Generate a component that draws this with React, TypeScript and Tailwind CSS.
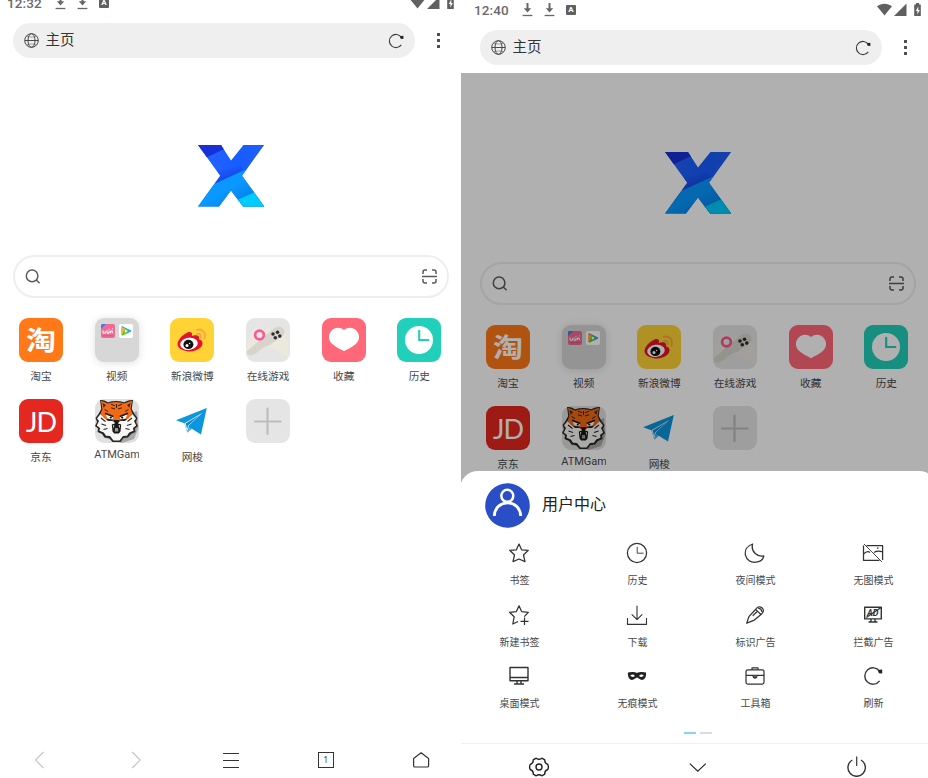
import React from "react";

const cjk = "font-['Roboto','Noto_Sans_CJK_SC',sans-serif]";

type P = { children?: React.ReactNode };

/* ---------- status bar ---------- */

const DownloadGlyph = () => (
  <svg width="11" height="14" viewBox="0 0 11 14" fill="none" stroke="#666" strokeWidth="2">
    <path d="M5.5 0v7" />
    <path d="M1.8 5.2 5.5 9.6 9.2 5.2z" fill="#666" stroke="none" />
    <path d="M.6 12.5h9.8" strokeWidth="1.3" />
  </svg>
);

const StatusBar = ({ time }: { time: string }) => (
  <div className="flex h-[20px] shrink-0 items-center pl-[13px] pr-[6.5px] text-[#6a6a6a]">
    <span className="w-[48px] font-['Roboto',sans-serif] text-[13.5px] font-medium leading-5 tracking-[0.1px]">{time}</span>
    <div className="flex items-center gap-[11px]">
      <DownloadGlyph />
      <DownloadGlyph />
    </div>
    <span className="ml-[11px] flex h-[10px] w-[10px] items-center justify-center rounded-[1px] bg-[#606060] font-['Roboto',sans-serif] text-[8px] font-bold leading-none text-white">
      A
    </span>
    <svg className="ml-auto" width="45" height="14" viewBox="0 0 45 14" fill="#606060">
      <path d="M0 3.2C4.4-.2 10.6-.2 15 3.2L7.5 12.6z" />
      <path d="M29.5 .5V13H17z" />
      <path d="M37.2 1.4h1.7V0h3.2v1.4h1.7V13h-6.6z" />
      <path d="M41.3 3.4 38.8 8h1.6v3.4l2.4-4.5h-1.5z" fill="#fff" />
    </svg>
  </div>
);

/* ---------- line icons ---------- */

const RefreshIcon = ({ size }: { size: number }) => (
  <svg width={size} height={size} viewBox="0 0 20 20" fill="none" stroke="#3a3a3a" strokeWidth="1.4">
    <path d="M16.6 5.2A8.2 8.2 0 1 0 16.6 14.8" />
    <path d="M14.8 4 19.2 3.4V7.4L15.8 7.3z" fill="#222" stroke="none" />
  </svg>
);

const Globe = () => (
  <svg width="15" height="15" viewBox="0 0 15 15" fill="none" stroke="#4a4a4a" strokeWidth="1">
    <circle cx="7.5" cy="7.5" r="6.8" />
    <ellipse cx="7.5" cy="7.5" rx="3.5" ry="6.8" />
    <path d="M.7 7.5h13.6" />
    <path d="M2.5 3.2c3 1.1 7 1.1 10 0M2.5 11.8c3-1.1 7-1.1 10 0" strokeWidth=".5" />
  </svg>
);

const XLogo = () => (
  <svg width="67" height="62" viewBox="0 0 67 62">
    <defs>
      <clipPath id="xclip">
        <path d="M0 0H23L33 15.5 45.5 0H66.2L44 30.7 66.2 61.5H45L33 45.5 21 61.5H0L22.2 30.7z" />
      </clipPath>
      <linearGradient id="xmid" x1="0" x2="1" y1="0" y2=".2">
        <stop offset="0" stopColor="#2864ff" />
        <stop offset=".65" stopColor="#175cff" />
        <stop offset="1" stopColor="#2260f4" />
      </linearGradient>
      <linearGradient id="xmidDark" x1=".3" x2=".65" y1="0" y2="1">
        <stop offset="0" stopColor="#1738cf" stopOpacity="0" />
        <stop offset="1" stopColor="#1738cf" stopOpacity=".75" />
      </linearGradient>
      <linearGradient id="xlow" x1="0" x2="1" y1="0" y2="1">
        <stop offset=".5" stopColor="#0898ff" />
        <stop offset=".82" stopColor="#087ce6" />
      </linearGradient>
    </defs>
    <g clipPath="url(#xclip)">
      <path d="M0 0h67v62H0z" fill="url(#xmid)" />
      <path d="M18 26 43 21 47 25 17 39z" fill="url(#xmidDark)" />
      <path d="M0 0H26V4.2L6 13.6H0z" fill="#1830d8" />
      <path d="M0 46.5 51 23 67 34V62H0z" fill="url(#xlow)" />
      <path d="M36 56.5 60 45.5 67 47V62H36z" fill="#00cbff" />
    </g>
  </svg>
);

/* ---------- tiles ---------- */

const Tile = ({ className, children }: P & { className: string }) => (
  <div className={`flex h-[44px] w-[44px] items-center justify-center overflow-hidden rounded-[9px] ${className}`}>{children}</div>
);

const Taobao = () => (
  <Tile className="bg-[#ff7919]">
    <span className="-mt-[2px] scale-y-[.87] font-['Noto_Sans_CJK_SC',sans-serif] text-[30px] font-bold leading-none text-white">淘</span>
  </Tile>
);

const Video = () => (
  <div className="flex h-[44px] w-[44px] items-start gap-[4px] rounded-[9px] bg-[#d7d7d7] pl-[6px] pt-[6px] shadow-[0_1px_8px_rgba(0,0,0,0.13)]">
    <svg width="14" height="14" viewBox="0 0 14 14">
      <rect width="14" height="14" rx="2" fill="#f06a96" />
      <path d="M0 2Q0 0 2 0H5L0 5z" fill="#397be5" />
      <path d="M2 6.4v2.8h2.4V7.1M6 6.3v3h2V6.8M9.5 9.2V7h1.8v2.2M8 4.8v1M11.4 4.4v1" stroke="#fff" strokeWidth="1" fill="none" />
      <path d="M2 11.7h10" stroke="#d94a7c" strokeWidth=".7" />
    </svg>
    <svg width="14" height="14" viewBox="0 0 14 14">
      <rect width="14" height="14" rx="2" fill="#fff" />
      <path d="M3 2.6 12 7 8 9z" fill="#15a6ef" stroke="#15a6ef" strokeLinejoin="round" />
      <path d="M2.8 3v8L6 8V5z" fill="#ffb62b" stroke="#ff9a22" strokeLinejoin="round" />
      <path d="M3.4 11.2 10 7.9 6 5.2z" fill="#5ac72c" stroke="#5ac72c" strokeLinejoin="round" />
      <path d="M5.8 5.2v3.6L8.8 7z" fill="#fff" />
    </svg>
  </div>
);

const Weibo = () => (
  <Tile className="bg-[#ffd235]">
    <svg width="44" height="44" viewBox="0 0 44 44">
      <path d="M7.5 26C7.5 22 12.5 16.5 17.5 14.4C21 13 23 15 21.8 18C25 16.8 30.2 16.7 28.9 21.2C33 22.3 33.6 26 31 29C28 32.4 23 33.8 18.3 33.4C12 32.7 7.5 30 7.5 26z" fill="#e3152c" />
      <ellipse cx="19" cy="25.8" rx="8.8" ry="6" transform="rotate(-9 19 25.8)" fill="#fff" />
      <ellipse cx="18.4" cy="26.4" rx="5" ry="4.6" fill="#111" />
      <circle cx="17" cy="27.4" r="1.5" fill="#fff" />
      <circle cx="19.6" cy="25.5" r=".7" fill="#fff" />
      <path d="M26.8 11.8C32.5 10.4 36.2 15 34.6 20.4M27 16C29.8 15.3 31.4 17.2 30.7 19.7" fill="none" stroke="#f9a640" strokeWidth="1.8" strokeLinecap="round" />
    </svg>
  </Tile>
);

const Games = () => (
  <Tile className="bg-[#e5e5e5]">
    <svg width="44" height="44" viewBox="0 0 44 44">
      <path d="M0 34C1 23 5 10 11.5 9.3C15 9 17 12.5 22 12C27 10.5 31 6.8 35.5 9C40 12 43 26 44 40C37 37 31 30 23.5 29.3C17 28 12 37 0 34z" fill="#ebe8dc" />
      <path d="M1 33 28.5 9.8C35 5.8 40.5 11 37.8 17L24 27C15 29 10 38 4 37.5Q0 37.5 1 33z" fill="#d7d5cb" />
      <circle cx="13.5" cy="17" r="4.4" fill="#eeeadf" stroke="#f75b99" strokeWidth="2.7" />
      <g fill="#2d2d32">
        <circle cx="27" cy="16" r="1.8" />
        <circle cx="31.5" cy="14.2" r="1.8" />
        <circle cx="29.3" cy="19.7" r="1.8" />
        <circle cx="33.8" cy="18.1" r="1.8" />
      </g>
    </svg>
  </Tile>
);

const Favorites = () => (
  <Tile className="bg-[#ff6878]">
    <svg width="44" height="44" viewBox="0 0 44 44">
      <path d="M22 12C18 8.8 12.6 9.2 9.4 12.8C5.8 17 6.2 22.5 10.2 26C14 29.5 19 31.2 22 33.3C25 31.2 30 29.5 33.8 26C37.8 22.5 38.2 17 34.6 12.8C31.4 9.2 26 8.8 22 12z" fill="#fff" />
    </svg>
  </Tile>
);

const HistoryTile = () => (
  <Tile className="bg-[#22cfba]">
    <svg width="44" height="44" viewBox="0 0 44 44">
      <circle cx="22" cy="22" r="14" fill="#fff" />
      <path d="M22.2 12V22H32.2" fill="none" stroke="#22cfba" strokeWidth="2.1" />
    </svg>
  </Tile>
);

const JD = () => (
  <Tile className="bg-[#e5281f]">
    <span className="font-['Lato',sans-serif] text-[27px] font-normal leading-none tracking-[-1px] text-white">JD</span>
  </Tile>
);

const Tiger = () => (
  <Tile className="bg-[#e0e0e0]">
    <svg width="44" height="44" viewBox="0 0 44 44">
      <path d="M42 12 43.5 29 39 40 27 44 10 39 4 29z" fill="#a8a8a8" />
      {/* dark outline of the head */}
      <path d="M5 .8Q10 1 13 3.3Q21 .5 29 3.3Q33 1 38 .8L36.8 10 39.5 15 42.5 19 41 23 43 27 40 29.5 40.5 33 36 35 33 38.5 28.5 39 25.5 43H17.5L14 39 9.5 38.5 7 35 2.5 33 3 29.5 0 27 2 23 .5 19 3.5 15 6.2 10z" fill="#2a2624" />
      {/* white mane and cheeks */}
      <path d="M5.5 15 2 19.5 4 22 1.8 26.5 5 29 4.5 31.8 8.8 33.5 11 36.8 15 37 18.5 41.5H24.5L28 37 32 36.8 34.2 33.5 38.5 31.8 38 29 41.2 26.5 39 22 41 19.5 37.5 15 30 22H13z" fill="#f6f6f4" />
      {/* orange forehead, ears and nose bridge */}
      <path d="M6 1.8 13 4.6Q21 1.5 29 4.6L37 1.8 35.6 10 37.5 15 33 20 25.5 19.5 25 23H18L17.5 19.5 10 20 5.5 15 7.4 10z" fill="#f26a12" />
      <path d="M7.5 4 11 6 8.6 8.8zM35.5 4 32 6 34.4 8.8z" fill="#3a2a22" />
      <path d="M10.5 15.5 18 17.8 17.5 20.5 12.5 19.5zM32.5 15.5 25 17.8 25.5 20.5 30.5 19.5z" fill="#fff" />
      <path d="M10 14.2 18.3 17.4M33 14.2 24.7 17.4" stroke="#1d1a18" strokeWidth="1.6" />
      <path d="M16 5.2 20 6.8M27 5.2 23 6.8M16 8.8 20 10M27 8.8 23 10M21.5 5V9M9.5 10.5 13 12.5M33.5 10.5 30 12.5" stroke="#2a211d" strokeWidth="1" />
      <path d="M6 19 10.5 22.5M37 19 32.5 22.5M6.5 25 11 26.5M36.5 25 32 26.5M8.5 30.5 12.5 29.5M34.5 30.5 30.5 29.5" stroke="#2a2624" strokeWidth="1.1" />
      <circle cx="15.8" cy="18.6" r="1.1" fill="#111" />
      <circle cx="27.2" cy="18.6" r="1.1" fill="#111" />
      <path d="M18.2 21H24.8L23 24.4H20zM16.8 25.5 21.5 24 26.2 25.5 25.5 32.5 23.8 34.5H19.2L17.5 32.5z" fill="#171717" />
      <path d="M18 26.3 19.3 26.2 18.8 29.5zM23.7 26.2H25L24.3 29.5z" fill="#fff" />
      <path d="M20 29H23L23.4 32.5H19.7z" fill="#999" />
    </svg>
  </Tile>
);

const Telegram = () => (
  <Tile className="bg-white">
    <svg width="44" height="44" viewBox="0 0 44 44">
      <path d="M36.8 9 6 21.2 14.4 24.2 17.2 33.6 21.8 29.8 31 35.4z" fill="#0b96dd" />
      <path d="M14.4 24.2 32.5 13.8 19 26.2 17.2 33.6z" fill="#d9effa" />
      <path d="M17.2 33.6 18.8 28.2 21.8 29.8z" fill="#5ab5e5" />
      <path d="M15.8 24.6 29 16.4 18 26.6 17.2 30z" fill="#0b87cf" />
    </svg>
  </Tile>
);

const AddTile = () => (
  <Tile className="bg-[#e5e5e5]">
    <svg width="44" height="44" viewBox="0 0 44 44" stroke="#bdbdbd" strokeWidth="2.2" strokeLinecap="round">
      <path d="M21.5 9.5V35M9 22.5H34.5" />
    </svg>
  </Tile>
);

const shortcuts: { icon: React.ReactNode; label: string; latin?: boolean }[] = [
  { icon: <Taobao />, label: "淘宝" },
  { icon: <Video />, label: "视频" },
  { icon: <Weibo />, label: "新浪微博" },
  { icon: <Games />, label: "在线游戏" },
  { icon: <Favorites />, label: "收藏" },
  { icon: <HistoryTile />, label: "历史" },
  { icon: <JD />, label: "京东" },
  { icon: <Tiger />, label: "ATMGam", latin: true },
  { icon: <Telegram />, label: "网梭" },
  { icon: <AddTile />, label: "" },
];

/* ---------- home screen ---------- */

const Home = ({ time }: { time: string }) => (
  <>
    <StatusBar time={time} />
    <div className="mt-[10px] flex h-[35px] shrink-0 items-center pl-[19px]">
      <div className="flex h-[35px] w-[402px] items-center rounded-full bg-[#efefef] pl-[11px] pr-[11px]">
        <Globe />
        <span className="ml-[6.5px] flex-1 pt-px text-[14.5px] leading-5 text-[#333]">主页</span>
        <RefreshIcon size={16} />
      </div>
      <div className="ml-[22px] flex flex-col gap-[3px]">
        <span className="h-[3px] w-[3px] bg-[#505050]" />
        <span className="h-[3px] w-[3px] bg-[#505050]" />
        <span className="h-[3px] w-[3px] bg-[#505050]" />
      </div>
    </div>
    <div className="mt-[87px] flex h-[62px] shrink-0 pl-[204px]">
      <XLogo />
    </div>
    <div className="ml-[19px] mt-[48px] flex h-[43px] w-[436px] shrink-0 items-center justify-between rounded-full border-2 border-[#eeeeee] pl-[10px] pr-[10px]">
      <svg width="16" height="16" viewBox="0 0 16 16" fill="none" stroke="#5a5a5a" strokeWidth="1.5" strokeLinecap="round">
        <circle cx="7.1" cy="6.9" r="5.8" />
        <path d="M11.4 11.2 14.2 13.8" />
      </svg>
      <svg width="15" height="15" viewBox="0 0 15 15" fill="none" stroke="#5a5a5a" strokeWidth="1.5">
        <path d="M1 5V3Q1 1 3 1H5M10 1H12Q14 1 14 3V5M14 10V12Q14 14 12 14H10M5 14H3Q1 14 1 12V10M0 7.5H15" />
      </svg>
    </div>
    <div className="ml-[9.2px] mt-[20px] grid w-[454px] shrink-0 grid-cols-6">
      {shortcuts.map((s, i) => (
        <div key={i} className="flex h-[81px] flex-col items-center">
          {s.icon}
          {s.latin ? (
            <span className="mt-[4px] w-[45px] overflow-hidden whitespace-nowrap text-[11px] leading-4 text-[#484848]">{s.label}</span>
          ) : (
            <span className="mt-[7px] whitespace-nowrap text-[10.7px] leading-4 text-[#484848]">{s.label}</span>
          )}
        </div>
      ))}
    </div>
  </>
);

const BottomNav = () => (
  <div className="mt-auto flex h-[36px] shrink-0 items-center justify-between pl-[34px] pr-[28px]">
    <svg width="24" height="18" viewBox="0 0 24 18" fill="none" stroke="#c3c3c3" strokeWidth="1.1">
      <path d="M15.5 1 7.5 9 15.5 17" />
    </svg>
    <svg width="24" height="18" viewBox="0 0 24 18" fill="none" stroke="#c3c3c3" strokeWidth="1.1">
      <path d="M9.2 1 17.2 9 9.2 17" />
    </svg>
    <div className="flex w-[24px] flex-col items-center gap-[6px]">
      <span className="h-px w-[16px] bg-[#333]" />
      <span className="h-px w-[16px] bg-[#333]" />
      <span className="h-px w-[16px] bg-[#333]" />
    </div>
    <div className="flex w-[24px] justify-center">
      <span className="flex h-[16px] w-[16px] items-center justify-center border border-[#333] font-['Noto_Sans',sans-serif] text-[8px] leading-none text-[#333]">1</span>
    </div>
    <svg width="24" height="18" viewBox="0 0 24 18" fill="none" stroke="#333" strokeWidth="1.2" strokeLinejoin="round">
      <path d="M4.6 7.5V14.7Q4.6 16 6 16H18.2Q19.6 16 19.6 14.7V7.5L12.1 1.8z" />
    </svg>
  </div>
);

/* ---------- menu sheet ---------- */

const MenuSvg = ({ children }: P) => (
  <svg width="22" height="22" viewBox="0 0 22 22" fill="none" stroke="#333" strokeWidth="1.25" strokeLinejoin="round">
    {children}
  </svg>
);

const menu: { label: string; icon: React.ReactNode }[] = [
  {
    label: "书签",
    icon: <MenuSvg><path d="M11 2 13.6 7.8 20.3 8.3 15.5 13 17 19.6 11 17 5 19.6 6.5 13 1.7 8.3 8.4 7.8z" /></MenuSvg>,
  },
  {
    label: "历史",
    icon: <MenuSvg><circle cx="11" cy="11" r="9.6" /><path d="M11.2 4.8V11.2H17.5" strokeWidth=".9" /></MenuSvg>,
  },
  {
    label: "夜间模式",
    icon: <MenuSvg><path d="M8.6 2C3.2 3.8 .4 8.2 1.5 13.3C2.6 18 6.8 20.7 11.8 20.2C16 19.8 19.2 17.4 19.8 13.8C14 15.4 6.5 10 8.6 2z" /></MenuSvg>,
  },
  {
    label: "无图模式",
    icon: <MenuSvg><path d="M4.5 3.5H20.6V18M17.5 18.3H1.5V3.5M1.5 12C4 9.5 6.2 9 8 10.5M12 10.5C15 8.5 17.5 9 20.5 9.8M15 6.2h1.5" /><path d="M2 2 20 20" strokeWidth=".9" /></MenuSvg>,
  },
  {
    label: "新建书签",
    icon: <MenuSvg><path d="M10 17.5 4.8 20 6.2 12.8 1.5 8.3 8.4 7.6 11 1.8 13.6 7.6 20.3 8.3 16.3 12.7M12.5 17.4H20.5M16.5 13.6V21" /></MenuSvg>,
  },
  {
    label: "下载",
    icon: <MenuSvg><path d="M11 1.8V15.5M5.7 10.4 11 15.7 16.3 10.4M1.5 14V20.4H20.5V14" strokeWidth="1.1" /></MenuSvg>,
  },
  {
    label: "标识广告",
    icon: <MenuSvg><path d="M2.7 19.2 4.9 12.6 12 5C13.7 2.5 16.2 2.3 18.2 4C20.1 5.8 19.6 8.2 17.6 10L9.8 16.4zM11.5 5.4 17 10.5M8.7 11.8 13 7.7M14.2 4.4Q17.6 4.5 17.8 8" /></MenuSvg>,
  },
  {
    label: "拦截广告",
    icon: (
      <MenuSvg>
        <path d="M2.7 3.2H19.3V14.9H2.7zM9 15V17.5M13 15V17.5M6.5 18H15.5" strokeWidth="1.4" />
        <text x="4.9" y="12.4" fontSize="9" fontWeight="bold" fontStyle="italic" fontFamily="Roboto" fill="#333" stroke="none">AD</text>
        <path d="M4.3 13.6 18.8 3.8" stroke="#333" />
      </MenuSvg>
    ),
  },
  {
    label: "桌面模式",
    icon: <MenuSvg><path d="M2 2.5H20V15.8H2zM2 12.5H20M9 16V18.8M13 16V18.8M6 19H16" strokeWidth="1.4" /></MenuSvg>,
  },
  {
    label: "无痕模式",
    icon: (
      <MenuSvg>
        <path d="M2 7.5C5 6.6 8.8 6.8 11 8C13.2 6.8 17 6.6 20 7.5C20.5 11 19 15 16 15C13.8 15 12.5 12.6 11 12.6C9.5 12.6 8.2 15 6 15C3 15 1.5 11 2 7.5z" fill="#222" stroke="none" />
        <path d="M4.2 10.8Q6.5 8.3 9 11Q6.5 13 4.2 10.8zM17.8 10.8Q15.5 8.3 13 11Q15.5 13 17.8 10.8z" fill="#fff" stroke="none" />
      </MenuSvg>
    ),
  },
  {
    label: "工具箱",
    icon: <MenuSvg><rect x="2" y="4.8" width="18" height="14.2" rx="1.8" /><path d="M8 4.7V2.8H14V4.7M2 10.4H20" /><path d="M8.8 10.4Q9.2 13 11 13.2Q12.8 13 13.2 10.4" fill="#666" /></MenuSvg>,
  },
  { label: "刷新", icon: <RefreshIcon size={20} /> },
];

const Sheet = () => (
  <div className="absolute -left-px bottom-0 flex h-[307px] w-[477px] flex-col rounded-t-[18px] bg-white">
    <div className="flex items-center pl-[24.5px] pt-[12px]">
      <svg width="45" height="45" viewBox="0 0 45 45" fill="none">
        <circle cx="22.5" cy="22.5" r="22.3" fill="#294ec6" />
        <circle cx="22.3" cy="12.8" r="6" stroke="#fff" strokeWidth="2.5" />
        <path d="M9.3 33C10 15.5 35 15.5 35.7 33" stroke="#fff" strokeWidth="2.9" />
      </svg>
      <span className="ml-[12.5px] pb-px text-[16px] leading-6 text-[#222]">用户中心</span>
    </div>
    <div className="mt-[14px] grid w-[472px] grid-cols-4">
      {menu.map((m) => (
        <div key={m.label} className="flex h-[61.6px] flex-col items-center">
          <div className="flex h-[22px] w-[22px] items-center justify-center">{m.icon}</div>
          <span className="ml-[1px] mt-[9px] text-[10px] leading-4 text-[#484848]">{m.label}</span>
        </div>
      ))}
    </div>
    <div className="mt-[5.4px] flex w-[476px] justify-center gap-[4px]">
      <span className="h-[2px] w-[12px] bg-[#83d6f0]" />
      <span className="h-[2px] w-[12px] bg-[#dcdcdc]" />
    </div>
    <div className="mt-auto grid h-[35px] w-[476px] grid-cols-3 border-t border-[#f0f0f0] pt-[11px]">
      <svg className="justify-self-center" width="24" height="24" viewBox="0 0 24 24" fill="none" stroke="#222" strokeWidth="1.4" strokeLinejoin="round">
        <path d="M9.2 3.2Q12 5.4 14.8 3.2L17.8 4.9Q17.4 8.2 20.8 9.5Q22 12 20.8 14.5Q17.4 15.8 17.8 19.1L14.8 20.8Q12 18.6 9.2 20.8L6.2 19.1Q6.6 15.8 3.2 14.5Q2 12 3.2 9.5Q6.6 8.2 6.2 4.9z" />
        <circle cx="12" cy="12" r="3" />
      </svg>
      <svg className="justify-self-center" width="24" height="24" viewBox="0 0 24 24" fill="none" stroke="#222" strokeWidth="1.1">
        <path d="M3.8 8.7 11.8 16.2 19.8 8.7" />
      </svg>
      <svg className="justify-self-center" width="24" height="24" viewBox="0 0 24 24" fill="none" stroke="#333" strokeWidth="1.4">
        <path d="M7.3 5A8.7 8.7 0 1 0 16 5" />
        <path d="M11.7 1.5V11" strokeWidth="1.2" />
      </svg>
    </div>
  </div>
);

export default function App() {
  return (
    <div className={`flex h-[778px] w-[928px] overflow-hidden bg-white ${cjk}`}>
      <div className="h-[778px] w-[454px] shrink-0 overflow-hidden">
        <div className="-ml-[6px] -mt-[7px] flex h-[785px] w-[467px] flex-col">
          <Home time="12:32" />
          <BottomNav />
        </div>
      </div>
      <div className="relative ml-[7px] flex h-[778px] w-[467px] shrink-0 flex-col overflow-hidden">
        <Home time="12:40" />
        <div className="absolute inset-x-0 bottom-0 top-[73px] bg-black/31" />
        <Sheet />
      </div>
    </div>
  );
}
